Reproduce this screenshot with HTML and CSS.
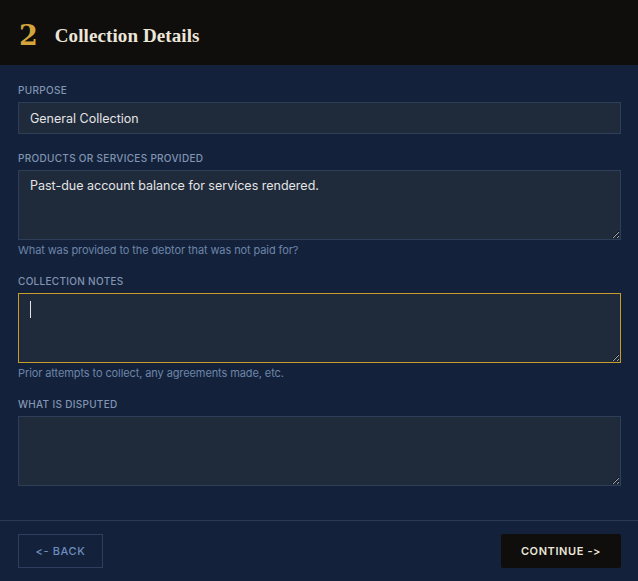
FILE: index.html
```html
<!DOCTYPE html>
<html>
<head>
<meta charset="utf-8">
<link rel="stylesheet" href="styles.css">
</head>
<body>
<div class="card">
  <header class="head">
    <span class="step">2</span>
    <h1 class="title">Collection Details</h1>
  </header>
  <form class="form">
    <div class="field">
      <label class="label">Purpose</label>
      <input class="input" type="text" value="General Collection">
    </div>
    <div class="field">
      <label class="label">Products or Services Provided</label>
      <textarea class="area">Past-due account balance for services rendered.</textarea>
      <div class="help">What was provided to the debtor that was not paid for?</div>
    </div>
    <div class="field">
      <label class="label">Collection Notes</label>
      <div class="area-wrap">
        <textarea class="area focused"></textarea>
        <span class="caret"></span>
      </div>
      <div class="help">Prior attempts to collect, any agreements made, etc.</div>
    </div>
    <div class="field">
      <label class="label">What is Disputed</label>
      <textarea class="area"></textarea>
    </div>
  </form>
  <footer class="foot">
    <button class="btn back" type="button">&lt;- Back</button>
    <button class="btn next" type="button">Continue -&gt;</button>
  </footer>
</div>
</body>
</html>
```
FILE: styles.css
```css
html, body {
  margin: 0;
  padding: 0;
  background: #13223a;
}
body {
  font-family: Inter, "Noto Sans", sans-serif;
  width: 638px;
  height: 581px;
  overflow: hidden;
}
.card {
  display: flex;
  flex-direction: column;
}
.head {
  height: 65px;
  background: #0f0e0c;
  display: flex;
  align-items: center;
  padding: 6px 18px 0 19px;
  gap: 17px;
  box-sizing: border-box;
}
.step {
  font-family: "DejaVu Serif", "Liberation Serif", serif;
  font-weight: bold;
  font-size: 27px;
  color: #d4a53c;
  line-height: 1;
}
.title {
  margin: 0;
  font-family: "Liberation Serif", serif;
  font-weight: bold;
  font-size: 19px;
  color: #ece6d8;
  letter-spacing: 0.1px;
}
.form {
  display: flex;
  flex-direction: column;
  gap: 17px;
  padding: 18px 17px 34px 18px;
}
.field {
  display: flex;
  flex-direction: column;
}
.label {
  font-size: 10px;
  line-height: 14px;
  text-transform: uppercase;
  letter-spacing: 0.3px;
  color: #8294b3;
  font-weight: 500;
  margin-bottom: 5px;
}
.input, .area {
  font-family: Inter, "Noto Sans", sans-serif;
  font-size: 12.5px;
  color: #e4e4e4;
  background: #1f2a3b;
  border: 1px solid #2d3d5a;
  box-sizing: border-box;
  width: 100%;
  outline: none;
  margin: 0;
}
.input {
  height: 32px;
  padding: 0 11px;
}
.area {
  height: 70px;
  padding: 6px 11px;
  resize: vertical;
  display: block;
  line-height: 17px;
}
.area.focused {
  border-color: #c99b2b;
}
.area-wrap {
  position: relative;
}
.caret {
  position: absolute;
  left: 12px;
  top: 8px;
  width: 1px;
  height: 17px;
  background: #e4e4e4;
}
.help {
  font-size: 11px;
  line-height: 14px;
  letter-spacing: -0.1px;
  color: #6d84a9;
  margin-top: 3px;
}
.foot {
  border-top: 1px solid #2a3a57;
  display: flex;
  justify-content: space-between;
  padding: 13px 17px 0 18px;
}
.btn {
  height: 34px;
  font-family: Inter, "Noto Sans", sans-serif;
  font-size: 11px;
  text-transform: uppercase;
  letter-spacing: 0.6px;
  font-weight: 600;
  cursor: pointer;
  box-sizing: border-box;
}
.back {
  width: 85px;
  background: transparent;
  border: 1px solid #2e3e5e;
  color: #6e8dbf;
  font-weight: 500;
}
.next {
  width: 120px;
  background: #0f0e0c;
  border: none;
  color: #ece6d8;
  border-radius: 2px;
}
```
